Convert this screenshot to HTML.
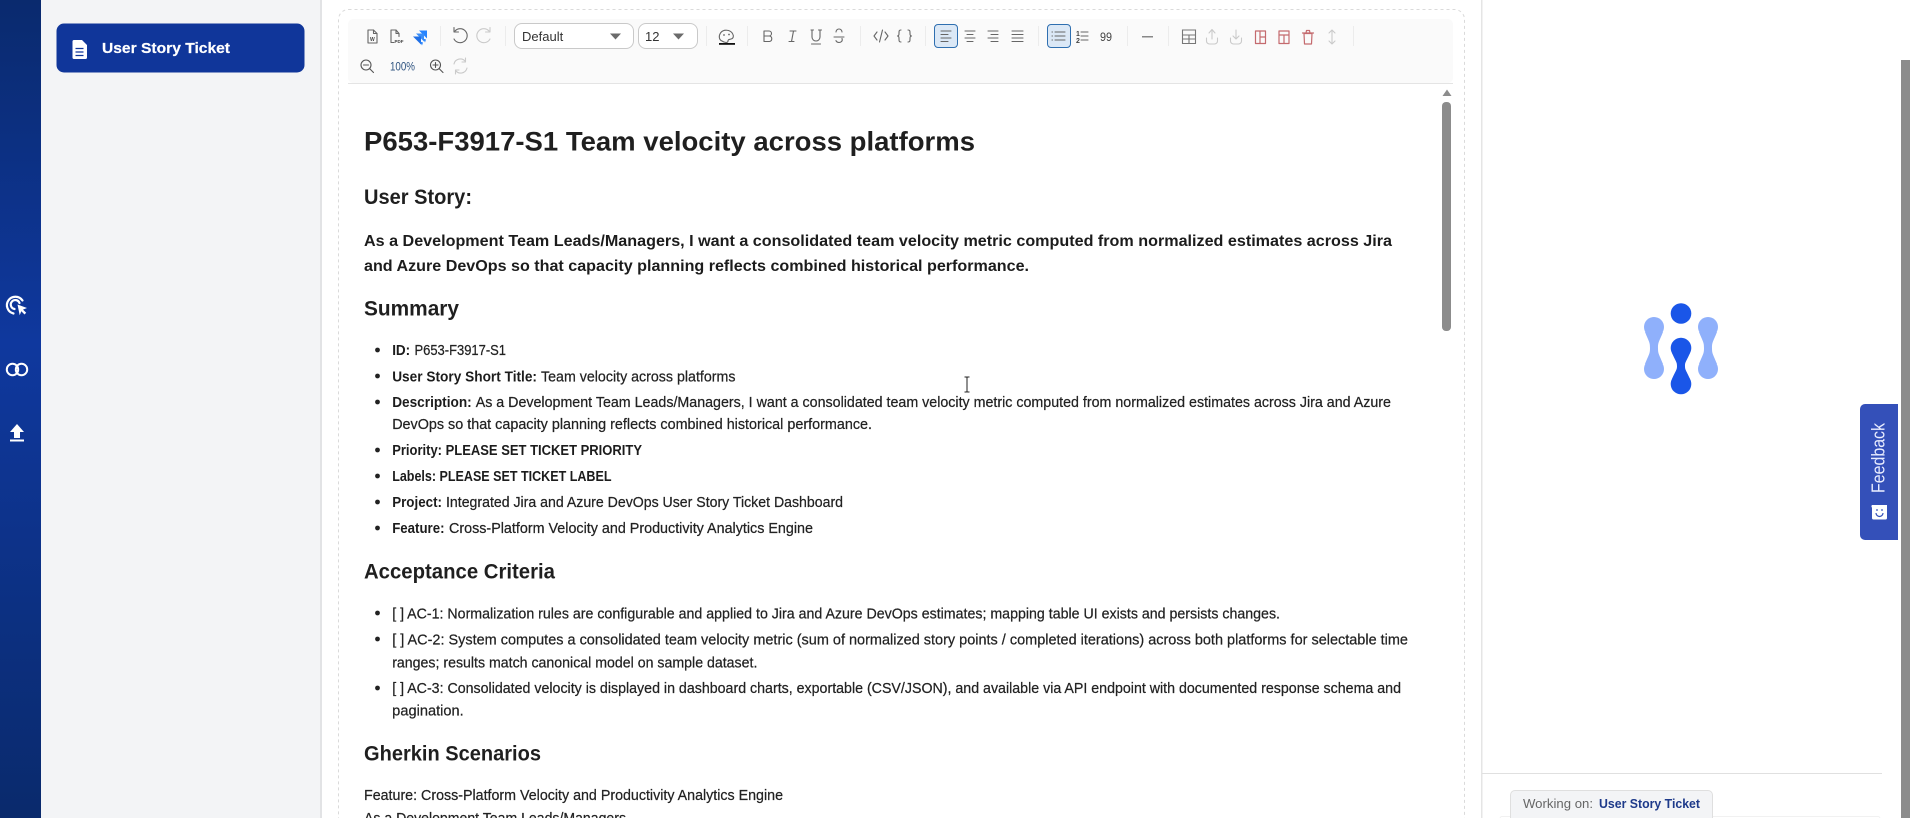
<!DOCTYPE html>
<html><head><meta charset="utf-8"><title>User Story Ticket</title>
<style>
html,body{margin:0;padding:0;width:1910px;height:818px;overflow:hidden;background:#fff}
svg{display:block;font-family:"Liberation Sans",sans-serif}
.h{font-weight:700;fill:#1f1f1f}
.b{font-weight:700;fill:#1c1c1c;font-size:14.5px}
.t{fill:#222;font-size:14.5px;stroke:#222;stroke-width:.22}
.i{fill:none;stroke:#666;stroke-width:1.1;stroke-linecap:round;stroke-linejoin:round}
.d{fill:none;stroke:#cacaca;stroke-width:1.1;stroke-linecap:round;stroke-linejoin:round}
.r{fill:none;stroke:#c46a6e;stroke-width:1.2;stroke-linecap:round;stroke-linejoin:round}
.sep{stroke:#ececec;stroke-width:1}
</style></head><body>
<svg width="1910" height="818" viewBox="0 0 1910 818" xmlns="http://www.w3.org/2000/svg">
<defs><linearGradient id="sb" x1="0" y1="0" x2="0" y2="1">
<stop offset="0" stop-color="#0a2a6e"/><stop offset=".42" stop-color="#0f389e"/><stop offset="1" stop-color="#0a2a6c"/></linearGradient></defs>
<rect width="1910" height="818" fill="#fff"/>

<!-- left rail -->
<rect x="0" y="0" width="41" height="818" fill="url(#sb)"/>
<rect x="41" y="0" width="279" height="818" fill="#f3f4f6"/>
<rect x="320" y="0" width="2" height="818" fill="#e2e3e5"/>
<g fill="none" stroke="#fff" stroke-width="2.2" stroke-linecap="round">
<path d="M22.500 300.500a8.500 8.500 0 1 0-9 13"/>
<path d="M19.500 303a4.500 4.500 0 1 0-5 6"/>
</g>
<path d="M17.500 304.500l9.500 3.500-4 1.600 3.200 3.200-1.700 1.700-3.200-3.200-1.600 4z" fill="#fff"/>
<g fill="none" stroke="#fff" stroke-width="2"><circle cx="12.500" cy="369.500" r="5.700"/><circle cx="21.500" cy="369.500" r="5.700"/></g>
<path d="M17 424l7 8h-4v6h-6v-6h-4z" fill="#fff"/><rect x="10" y="439.500" width="14" height="2" fill="#fff"/>

<!-- button -->
<rect x="57" y="24" width="247" height="48" rx="7" fill="#10369a" stroke="#10369a"/>
<path d="M74 40h8l5 5v12.500a1.500 1.500 0 0 1-1.500 1.500h-11.500a1.500 1.500 0 0 1-1.500-1.500v-16a1.500 1.500 0 0 1 1.500-1.500z" fill="#fff"/>
<path d="M75.500 48.500h8M75.500 52h8M75.500 55.500h8" stroke="#10369a" stroke-width="1.300"/>
<text x="102" y="53" font-size="15" font-weight="700" fill="#fff" textLength="128" lengthAdjust="spacingAndGlyphs" stroke="#fff" stroke-width=".2">User Story Ticket</text>

<!-- editor frame -->
<rect x="338.500" y="9.500" width="1126" height="830" rx="10" fill="#fff" stroke="#dadada" stroke-dasharray="3 3"/>
<rect x="348" y="19" width="1105" height="64" rx="5" fill="#fafafa"/>
<rect x="348" y="83" width="1105" height="1" fill="#e4e4e4"/>

<!-- toolbar row 1 -->
<g class="i">
<path d="M368 30h5.500l3.500 3.500v9.500h-9z"/><path d="M373.500 30v3.500h3.500"/>
<path d="M391 30h5l3 3.500v3M391 30v12.500h3"/><path d="M396 30v3.500h3"/>
</g>
<text x="370" y="41" font-size="5" font-weight="700" fill="#444">W</text>
<text x="394.500" y="43" font-size="4.500" font-weight="700" fill="#444">PDF</text>
<path d="M419 30.500h8v8z" fill="#2684ff"/><path d="M416 33.500h8v8z" fill="#3a8ef8"/><path d="M413 36.500h8v8z" fill="#1f6fe5"/>
<path d="M423 38.500l3 1-1 3zM420 41.500l3 1-1 3z" fill="#2684ff"/>
<line class="sep" x1="440.500" y1="26" x2="440.500" y2="46"/>
<path class="i" d="M455 31a7 7 0 1 1-1 8"/><path class="i" d="M454 27.500v4.500h4.500"/>
<path class="d" d="M489 31a7 7 0 1 0 1 8"/><path class="d" d="M490 27.500v4.500h-4.500"/>
<line class="sep" x1="505.500" y1="26" x2="505.500" y2="46"/>
<rect x="514.500" y="23.500" width="119" height="25" rx="7.500" fill="#fff" stroke="#c9c9c9"/>
<text x="522" y="41" font-size="13" fill="#333">Default</text>
<path d="M610 33.500h11l-5.500 6z" fill="#6b6b6b"/>
<rect x="638.500" y="23.500" width="59" height="25" rx="7.500" fill="#fff" stroke="#c9c9c9"/>
<text x="645" y="41" font-size="13" fill="#333">12</text>
<path d="M673 33.500h11l-5.500 6z" fill="#6b6b6b"/>
<line class="sep" x1="706.500" y1="26" x2="706.500" y2="46"/>
<path class="i" d="M722 41c-3-1-3.500-5-1.500-8 3-4 9.500-3.500 12 .5 1.500 2.500 1 5-1.500 5.500-2 .5-3 .5-3 2 0 1-1 1.500-2 1.500-1.500 0-2.500-.5-4-1.500z"/>
<circle cx="724" cy="35" r=".9" fill="#666"/><circle cx="729" cy="34.500" r=".9" fill="#666"/>
<rect x="719" y="43" width="16" height="1.800" fill="#111"/>
<line class="sep" x1="747.500" y1="26" x2="747.500" y2="46"/>
<g class="i">
<path d="M764 31h5a2.500 2.500 0 0 1 0 5h-5zM764 36h5.500a2.800 2.800 0 0 1 0 5.500h-5.500zM764 31v10.500"/>
<path d="M790 31h6M789 41.500h5M793.500 31l-2 10.500"/>
<path d="M812 30v7a4 4 0 0 0 8 0v-7M811 30h2.500M818.500 30h3M811.500 44h9"/>
<path d="M836 32a3 3 0 0 1 6 0M834 37h10M842 38.500c1 3-1.500 4-3 4-1.500 0-3-1-3-2"/>
</g>
<line class="sep" x1="860.500" y1="26" x2="860.500" y2="46"/>
<g class="i">
<path d="M877 32l-3 4 3 4M885 32l3 4-3 4M882.500 30l-3 12"/>
<path d="M901 30c-2 0-2 1-2 3s0 2.500-1.500 3c1.500.5 1.500 1 1.500 3s0 3 2 3M908 30c2 0 2 1 2 3s0 2.500 1.500 3c-1.500.5-1.500 1-1.500 3s0 3-2 3"/>
</g>
<line class="sep" x1="925.500" y1="26" x2="925.500" y2="46"/>
<rect x="934.500" y="24.500" width="23" height="23" rx="3.500" fill="#dbe8f6" stroke="#2f6fb0"/>
<g class="i" stroke-width="1">
<path d="M941 31h10M941 34.500h7M941 38h10M941 41.500h7"/>
<path d="M965 31h10M967 34.500h6M965 38h10M967 41.500h6"/>
<path d="M988 31h10M991 34.500h7M988 38h10M991 41.500h7"/>
<path d="M1012 31h11M1012 34.500h11M1012 38h11M1012 41.500h11"/>
</g>
<line class="sep" x1="1038.500" y1="26" x2="1038.500" y2="46"/>
<rect x="1047.500" y="24.500" width="23" height="23" rx="3.500" fill="#dbe8f6" stroke="#2f6fb0"/>
<g class="i" stroke-width="1">
<path d="M1055 32h10M1055 36h10M1055 40h10"/><path d="M1052 32h.5M1052 36h.5M1052 40h.5"/>
<path d="M1081 32h7M1081 36h7M1081 40h7"/>
</g>
<text x="1076" y="36" font-size="7" font-weight="700" fill="#444">1</text>
<text x="1076" y="43" font-size="7" font-weight="700" fill="#444">2</text>
<text x="1100" y="41" font-size="12" fill="#444" textLength="12" lengthAdjust="spacingAndGlyphs">99</text>
<line class="sep" x1="1127.500" y1="26" x2="1127.500" y2="46"/>
<rect x="1142" y="36" width="11" height="1.500" fill="#888"/>
<line class="sep" x1="1168.500" y1="26" x2="1168.500" y2="46"/>
<path d="M1182.500 30h13v13.500h-13zM1182.500 35h13M1182.500 39h13M1189 35v8.500" fill="none" stroke="#777" stroke-width="1.100"/>
<g class="d">
<path d="M1212 39v-9M1209 33l3-3.500 3 3.500M1206.500 38v3a3 3 0 0 0 3 3h5a3 3 0 0 0 3-3v-3"/>
<path d="M1236 30v9M1233 36l3 3 3-3M1230.500 38v3a3 3 0 0 0 3 3h5a3 3 0 0 0 3-3v-3"/>
</g>
<g class="r">
<path d="M1255.500 31h10v12.500h-10zM1260 31v12.500M1260 37h5.500"/>
<path d="M1279 31h10v12.500h-10zM1279 35h10M1284 35v8.500"/>
<path d="M1304 33.500h8l-.5 10.500h-7zM1302.500 33h11M1306 33l.5-2.500h3l.5 2.500"/>
</g>
<path class="d" d="M1332 30v14M1329 33l3-3 3 3M1329 41l3 3 3-3"/>
<line class="sep" x1="1353.500" y1="26" x2="1353.500" y2="46"/>

<!-- toolbar row 2 -->
<g class="i" style="stroke:#555"><circle cx="366" cy="65" r="5"/><path d="M370 69l3.500 3.500M363.500 65h5"/></g>
<text x="390" y="70.500" font-size="12" fill="#2f5480" textLength="25" lengthAdjust="spacingAndGlyphs">100%</text>
<g class="i" style="stroke:#555"><circle cx="435.500" cy="65" r="5"/><path d="M439.500 69l3.500 3.500M433 65h5M435.500 62.500v5"/></g>
<path class="d" d="M454 64a6.500 6.500 0 0 1 11.500-2.500M467 68a6.500 6.500 0 0 1-11.500 2.500M465.500 58v4h-3.500M455.500 74v-4h3.500"/>

<!-- editor content -->
<text class="h" x="364" y="150.500" font-size="27" textLength="611" lengthAdjust="spacingAndGlyphs">P653-F3917-S1 Team velocity across platforms</text>
<text class="h" x="364" y="204" font-size="21" textLength="108" lengthAdjust="spacingAndGlyphs">User Story:</text>
<text class="b" style="font-size:16px" x="364" y="246" textLength="1028" lengthAdjust="spacingAndGlyphs">As a Development Team Leads/Managers, I want a consolidated team velocity metric computed from normalized estimates across Jira</text>
<text class="b" style="font-size:16px" x="364" y="271" textLength="665" lengthAdjust="spacingAndGlyphs">and Azure DevOps so that capacity planning reflects combined historical performance.</text>
<text class="h" x="364" y="315.500" font-size="21" textLength="95" lengthAdjust="spacingAndGlyphs">Summary</text>

<g fill="#222">
<circle cx="377.500" cy="350" r="2.400"/><circle cx="377.500" cy="376" r="2.400"/><circle cx="377.500" cy="402" r="2.400"/>
<circle cx="377.500" cy="450" r="2.400"/><circle cx="377.500" cy="476" r="2.400"/><circle cx="377.500" cy="502" r="2.400"/><circle cx="377.500" cy="528" r="2.400"/>
<circle cx="377.500" cy="613" r="2.400"/><circle cx="377.500" cy="639" r="2.400"/><circle cx="377.500" cy="688" r="2.400"/>
</g>
<text class="b" x="392.200" y="355" textLength="18" lengthAdjust="spacingAndGlyphs">ID:</text>
<text class="t" x="414.500" y="355" textLength="91.500" lengthAdjust="spacingAndGlyphs">P653-F3917-S1</text>
<text class="b" x="392.200" y="381.500" textLength="144.800" lengthAdjust="spacingAndGlyphs">User Story Short Title:</text>
<text class="t" x="541" y="381.500" textLength="194.500" lengthAdjust="spacingAndGlyphs">Team velocity across platforms</text>
<text class="b" x="392.200" y="407" textLength="79.500" lengthAdjust="spacingAndGlyphs">Description:</text>
<text class="t" x="475.700" y="407" textLength="915.300" lengthAdjust="spacingAndGlyphs">As a Development Team Leads/Managers, I want a consolidated team velocity metric computed from normalized estimates across Jira and Azure</text>
<text class="t" x="392.200" y="429" textLength="479.800" lengthAdjust="spacingAndGlyphs">DevOps so that capacity planning reflects combined historical performance.</text>
<text class="b" x="392.200" y="455" textLength="249.800" lengthAdjust="spacingAndGlyphs">Priority: PLEASE SET TICKET PRIORITY</text>
<text class="b" x="392.200" y="481" textLength="219.300" lengthAdjust="spacingAndGlyphs">Labels: PLEASE SET TICKET LABEL</text>
<text class="b" x="392.200" y="507" textLength="49.800" lengthAdjust="spacingAndGlyphs">Project:</text>
<text class="t" x="446" y="507" textLength="397" lengthAdjust="spacingAndGlyphs">Integrated Jira and Azure DevOps User Story Ticket Dashboard</text>
<text class="b" x="392.200" y="533" textLength="52.300" lengthAdjust="spacingAndGlyphs">Feature:</text>
<text class="t" x="449" y="533" textLength="364" lengthAdjust="spacingAndGlyphs">Cross-Platform Velocity and Productivity Analytics Engine</text>

<text class="h" x="364" y="578.500" font-size="21" textLength="191" lengthAdjust="spacingAndGlyphs">Acceptance Criteria</text>
<text class="t" x="392.200" y="618.500" textLength="887.800" lengthAdjust="spacingAndGlyphs">[ ] AC-1: Normalization rules are configurable and applied to Jira and Azure DevOps estimates; mapping table UI exists and persists changes.</text>
<text class="t" x="392.200" y="644.500" textLength="1015.800" lengthAdjust="spacingAndGlyphs">[ ] AC-2: System computes a consolidated team velocity metric (sum of normalized story points / completed iterations) across both platforms for selectable time</text>
<text class="t" x="392.200" y="667.500" textLength="365.200" lengthAdjust="spacingAndGlyphs">ranges; results match canonical model on sample dataset.</text>
<text class="t" x="392.200" y="693" textLength="1008.800" lengthAdjust="spacingAndGlyphs">[ ] AC-3: Consolidated velocity is displayed in dashboard charts, exportable (CSV/JSON), and available via API endpoint with documented response schema and</text>
<text class="t" x="392.200" y="715.500" textLength="71.500" lengthAdjust="spacingAndGlyphs">pagination.</text>
<text class="h" x="364" y="760.500" font-size="21" textLength="177" lengthAdjust="spacingAndGlyphs">Gherkin Scenarios</text>
<text class="t" x="364" y="800" textLength="419" lengthAdjust="spacingAndGlyphs">Feature: Cross-Platform Velocity and Productivity Analytics Engine</text>
<text class="t" x="364" y="823" textLength="262" lengthAdjust="spacingAndGlyphs">As a Development Team Leads/Managers</text>

<!-- I-beam cursor -->
<path d="M964.500 377h2l.5.700.5-.700h2M967 378v13M964.500 392h2l.5-.700.5.700h2" fill="none" stroke="#222" stroke-width="1"/>

<!-- editor scrollbar -->
<path d="M1442.500 96l4.500-6.500 4.500 6.500z" fill="#8c8c8c"/>
<rect x="1442" y="102" width="9" height="229" rx="4" fill="#8c8c8c"/>

<!-- right panel -->
<rect x="1481" y="0" width="1.500" height="818" fill="#e5e5e5"/>
<g fill="#8fb0fb">
<circle cx="1654" cy="327" r="10"/><circle cx="1654" cy="369" r="10"/>
<path d="M1645 332C1649 342 1650 342 1650 348C1650 354 1649 354 1645 364H1663C1659 354 1658 354 1658 348C1658 342 1659 342 1663 332Z"/>
<circle cx="1708" cy="327" r="10"/><circle cx="1708" cy="369" r="10"/>
<path d="M1699 332C1703 342 1704 342 1704 348C1704 354 1703 354 1699 364H1717C1713 354 1712 354 1712 348C1712 342 1713 342 1717 332Z"/>
</g>
<g fill="#1a56e8">
<circle cx="1681" cy="313.500" r="10.300"/><circle cx="1681" cy="348" r="10.300"/><circle cx="1681" cy="384" r="10.300"/>
<path d="M1672 353C1676 362 1677 362 1677 366C1677 370 1676 370 1672 379H1690C1686 370 1685 370 1685 366C1685 362 1686 362 1690 353Z"/>
</g>
<rect x="1482" y="773" width="400" height="1" fill="#e0e0e0"/>
<rect x="1500" y="816.500" width="380" height="4" rx="2" fill="#fff" stroke="#f1f1f1"/>
<rect x="1510.500" y="790.500" width="202" height="32" rx="4.500" fill="#f3f4f6" stroke="#dfdfdf"/>
<text x="1523" y="808" font-size="13" fill="#666" textLength="70" lengthAdjust="spacingAndGlyphs">Working on:</text>
<text x="1599" y="808" font-size="13" font-weight="700" fill="#1e3a8a" textLength="101" lengthAdjust="spacingAndGlyphs">User Story Ticket</text>

<!-- feedback -->
<path d="M1898 404h-33a5 5 0 0 0-5 5v126a5 5 0 0 0 5 5h33z" fill="#3450b9"/>
<text transform="translate(1884.500 493) rotate(-90)" font-size="18" fill="#e9edff" textLength="70" lengthAdjust="spacingAndGlyphs">Feedback</text>
<path d="M1872 505h15v13a1.500 1.500 0 0 1-1.500 1.500h-12a1.500 1.500 0 0 1-1.500-1.500z" fill="#fff"/>
<path d="M1871 505l3 3h-2z" fill="#fff"/>
<circle cx="1877" cy="510" r=".9" fill="#3450b9"/><circle cx="1882" cy="510" r=".9" fill="#3450b9"/>
<path d="M1876 513a3.500 3.500 0 0 0 7 0" fill="none" stroke="#3450b9" stroke-width="1.200"/>

<!-- page scrollbar -->
<rect x="1901" y="60" width="9" height="758" fill="#8c8c8c"/>
</svg>
</body></html>
